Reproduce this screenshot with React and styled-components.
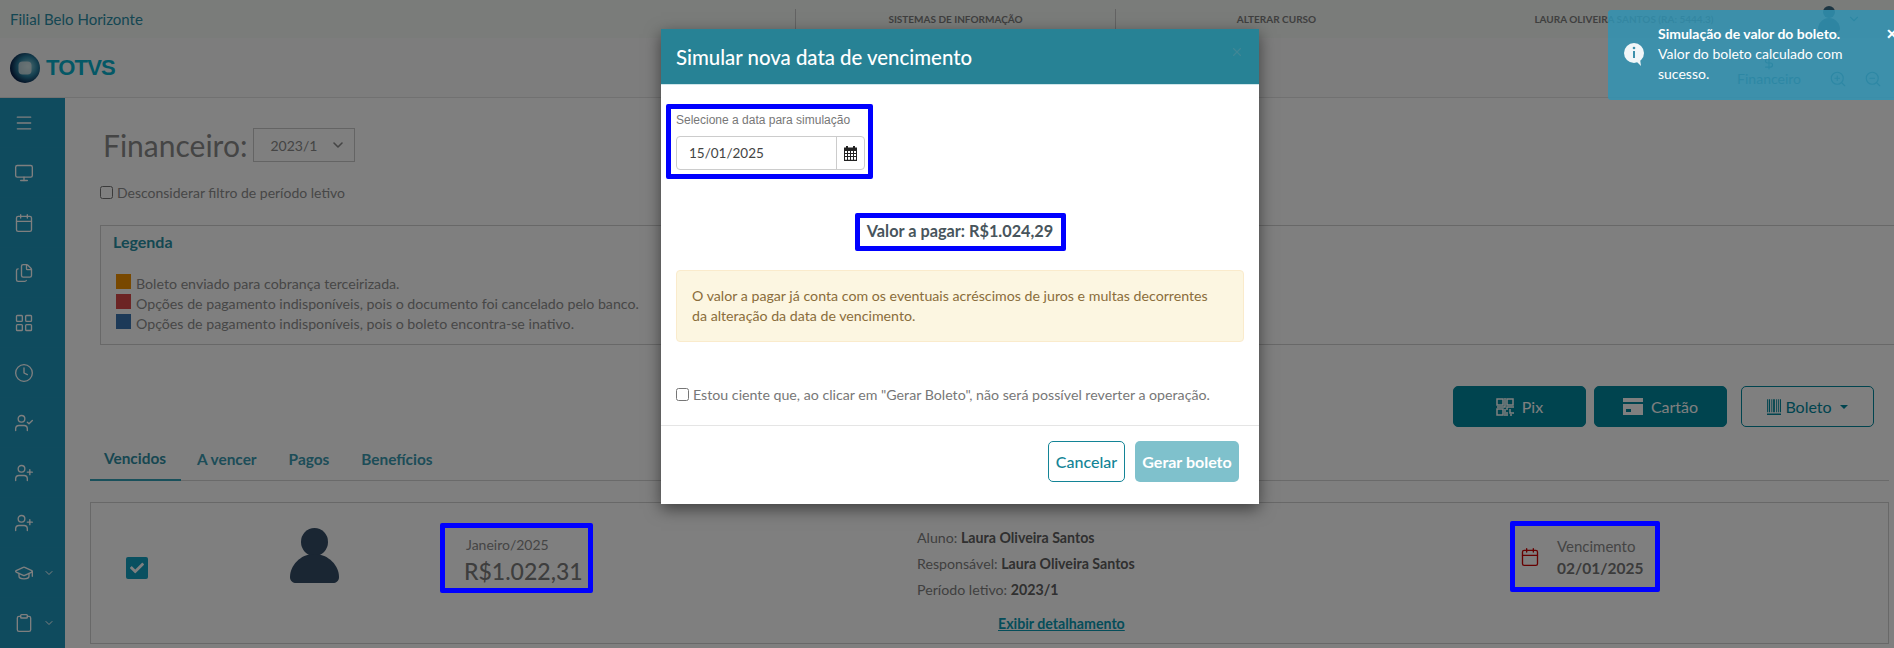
import React from "react";
import styled, { createGlobalStyle } from "styled-components";
import {
  Menu, Monitor, Calendar, Files, LayoutGrid, Clock, UserCheck, UserPlus,
  GraduationCap, Clipboard, ChevronDown, ZoomIn, ZoomOut, DollarSign, X,
} from "lucide-react";
import { FaCheck } from "react-icons/fa";

const Global = createGlobalStyle`
  html, body { margin: 0; padding: 0; width: 1894px; height: 648px; overflow: hidden; background: #fff; }
  * { box-sizing: border-box; }
  body { font-family: "Lato", "Noto Sans", sans-serif; font-size: 14px; color: #8a8a8a; }
`;

const Page = styled.div`
  width: 1894px; height: 648px; display: flex; flex-direction: column; overflow: hidden; position: relative;
`;
const TopBar = styled.div`
  height: 38px; display: flex; align-items: center; background: #f4f8f4; flex: none;
`;
const Branch = styled.div`
  width: 795px; padding-left: 10px; font-size: 15px; color: #2a8ea6;
`;
const TopCell = styled.div`
  width: ${(p) => p.$w}px; height: 20px; display: flex; align-items: center; justify-content: center;
  font-size: 10px; font-weight: 700; color: #7f7f7f;
  border-left: ${(p) => (p.$line ? "1px solid #c6c6c6" : "none")};
`;
const UserBlob = styled.div`
  margin-left: 6px; display: flex; align-items: center; gap: 6px; color: #3b6c86;
  svg:last-child { color: #2a8ea6; }
`;
const LogoBar = styled.div`
  height: 60px; flex: none; display: flex; align-items: center; justify-content: space-between;
  border-bottom: 1px solid #e2e2e2; padding: 0 12px 0 10px; background: #fbfbfb;
`;
const Logo = styled.div`
  display: flex; align-items: center; gap: 6px;
`;
const LogoWord = styled.span`
  font-family: "Liberation Sans", sans-serif; font-weight: 700; font-size: 22px; color: #08b0cc; letter-spacing: -0.8px;
`;
const ZoomTools = styled.div`
  display: flex; align-items: flex-end; gap: 17px; color: #2a8ea6; padding-top: 8px;
`;
const FinanceLink = styled.div`
  display: flex; flex-direction: column; align-items: center; font-size: 14px; margin-right: 11px; line-height: 18px;
`;
const Main = styled.div`
  flex: 1; display: flex; min-height: 0;
`;
const Sidebar = styled.nav`
  width: 65px; flex: none; background: #1f97bd; display: flex; flex-direction: column; overflow: hidden;
`;
const SideItem = styled.div`
  height: 50px; flex: none; display: flex; align-items: center; padding-left: 14px; gap: 9px; color: #fff;
  border-bottom: 1px solid #2196bd;
`;
const Content = styled.main`
  flex: 1; padding: 30px 5px 0 25px; min-width: 0;
`;
const TitleRow = styled.div`
  display: flex; align-items: center; gap: 6px; padding-left: 13px; height: 34px;
`;
const Title = styled.h1`
  margin: 0; font-size: 30px; font-weight: 400; color: #8a8a8a; line-height: 34px;
`;
const YearSelect = styled.div`
  width: 102px; height: 34px; border: 1px solid #c8c8c8; display: flex; align-items: center;
  justify-content: space-between; padding: 0 8px 0 16px; font-size: 14px; color: #8a8a8a; background: #fff;
`;
const FilterRow = styled.label`
  display: flex; align-items: center; gap: 4px; margin: 22px 0 0 10px; height: 17px; color: #8e8e8e; font-size: 14px;
`;
const Check = styled.input.attrs({ type: "checkbox" })`
  margin: 0; width: 13px; height: 13px; flex: none;
`;
const Legend = styled.section`
  margin: 24px -5px 0 10px; height: 120px; border: 1px solid #d0d0d0; border-right: 0; padding: 6px 15px 0 12px;
`;
const LegendTitle = styled.h3`
  margin: 0 0 21px; font-size: 16px; font-weight: 700; color: #2890a4; line-height: 20px;
`;
const LegendRow = styled.div`
  display: flex; align-items: center; gap: 5px; height: 20px; margin-left: 3px; color: #8e8e8e; font-size: 14.2px;
`;
const Swatch = styled.span`
  width: 15px; height: 15px; flex: none; background: ${(p) => p.$c}; margin-top: -3px;
`;
const Actions = styled.div`
  display: flex; justify-content: flex-end; gap: 8px; margin-top: 41px; padding-right: 15px;
`;
const PayButton = styled.button`
  width: 133px; height: 41px; border-radius: 5px; display: flex; align-items: center; justify-content: center;
  gap: ${(p) => (p.$outline ? "4px" : "8px")}; font-family: inherit; font-size: 16px;
  margin-left: ${(p) => (p.$outline ? "6px" : "0")};
  background: ${(p) => (p.$outline ? "#fff" : "#00889e")};
  border: 1px solid #00889e;
  color: ${(p) => (p.$outline ? "#00889e" : "#fff")};
`;
const Caret = styled.span`
  width: 0; height: 0; border-left: 4px solid transparent; border-right: 4px solid transparent;
  border-top: 4px solid currentColor; margin-left: 4px;
`;
const Tabs = styled.div`
  display: flex; margin-top: 10px; height: 44px; border-bottom: 1px solid #d4d4d4;
`;
const Tab = styled.div`
  height: 44px; display: flex; align-items: center; font-size: 15.4px; font-weight: 700;
  padding: ${(p) => (p.$active ? "0 15px 0 14px" : "0 16px")};
  color: ${(p) => (p.$active ? "#2f8ea3" : "#3a9ab0")};
  border-bottom: ${(p) => (p.$active ? "2px solid #32a0b6" : "none")};
`;
const Card = styled.section`
  margin-top: 21px; height: 142px; border: 1px solid #d0d0d0; display: grid;
  grid-template-columns: 199px 150px 477px 593px 1fr; padding-top: 20px; align-items: start;
`;
const CheckCell = styled.div`
  padding: 34px 0 0 35px;
`;
const CheckedBox = styled.span`
  width: 22px; height: 22px; border-radius: 2px; background: #12a0c0; color: #fff; display: flex;
  align-items: center; justify-content: center;
`;
const PersonCell = styled.div`
  padding-top: 5px;
`;
const MonthSlot = styled.div`
  width: 153px; height: 70px; padding: 10px 0 0 24px; display: flex; flex-direction: column;
`;
const MonthName = styled.span`
  font-size: 14px; color: #8a8a8a; line-height: 24px; padding-left: 2px;
`;
const MonthValue = styled.span`
  font-size: 23px; color: #7c7c7c; font-weight: 500; line-height: 28px;
`;
const InfoCell = styled.div`
  padding-top: 2px; font-size: 14.2px; color: #7e7e7e;
`;
const InfoLine = styled.div`
  line-height: 26px; b { color: #606060; }
`;
const DetailLink = styled.a`
  display: inline-block; margin: 8px 0 0 81px; line-height: 26px; font-weight: 700; color: #0a9ab4; text-decoration: underline;
`;
const DueSlot = styled.div`
  width: 150px; height: 71px; margin-top: -2px; display: flex; align-items: center; padding-left: 10px; gap: 17px; color: #cc0000;
`;
const DueText = styled.div`
  display: flex; flex-direction: column; color: #8a8a8a; font-size: 15px; line-height: 22px;
  b { font-size: 15.5px; color: #777; }
`;
const Overlay = styled.div`
  position: absolute; inset: 0; background: rgba(0, 0, 0, 0.5); padding: 29px 0 0 661px;
`;
const Frame = styled.div`
  position: absolute; left: ${(p) => p.$x}px; top: ${(p) => p.$y}px; width: ${(p) => p.$w}px; height: ${(p) => p.$h}px;
  border: 5px solid #0000ff; border-radius: 2px;
`;
const Highlight = styled.div`
  border: 5px solid #0000ff; border-radius: 2px; background: #fff;
`;
const Modal = styled.div`
  width: 598px; height: 475px; background: #fff; box-shadow: 0 5px 15px rgba(0, 0, 0, 0.5);
  display: flex; flex-direction: column;
`;
const ModalHeader = styled.header`
  height: 56px; flex: none; background: #278295; border-bottom: 1px solid #cfe6ea;
  display: flex; align-items: center; justify-content: space-between; padding: 0 15px;
  color: #fff; svg { color: #3f8795; margin-top: -10px; }
`;
const ModalTitle = styled.h4`
  margin: 0; font-size: 20.4px; font-weight: 500; line-height: 24px;
`;
const ModalBody = styled.div`
  padding: 19px 15px 21px; border-bottom: 1px solid #e5e5e5; flex: none; display: flex; flex-direction: column;
`;
const DateBox = styled(Highlight)`
  width: 207px; height: 75px; margin-left: -10px; padding: 3px 3px 0 5px;
`;
const DateLabel = styled.div`
  font-family: "Liberation Sans", sans-serif; font-size: 12px; color: #777; line-height: 16px;
`;
const DateField = styled.div`
  margin-top: 8px; width: 189px; height: 34px; border: 1px solid #ccc; border-radius: 4px; display: flex; font-size: 13.5px; color: #444;
`;
const DateValue = styled.div`
  flex: 1; padding-left: 12px; display: flex; align-items: center;
`;
const DateIcon = styled.div`
  width: 28px; border-left: 1px solid #ccc; display: flex; align-items: center; justify-content: center; color: #222;
`;
const ValueBox = styled(Highlight)`
  align-self: center; width: 211px; height: 38px; margin-top: 34px; padding-bottom: 3px; display: flex; align-items: center; justify-content: center;
  font-size: 16.3px; font-weight: 700; color: #48555c; white-space: nowrap;
`;
const Alert = styled.div`
  margin-top: 19px; height: 72px; padding: 15px 25px 15px 15px; border: 1px solid #faebcc; border-radius: 4px; background: #fcf6e1;
  color: #8a6d3b; line-height: 20px; font-size: 14.2px;
`;
const AgreeRow = styled.label`
  display: flex; align-items: center; gap: 4px; margin-top: 42px; height: 20px; color: #777; font-size: 14.2px; white-space: nowrap;
`;
const ModalFooter = styled.footer`
  display: flex; justify-content: flex-end; gap: 10px; padding: 15px 20px 0 0;
`;
const CancelButton = styled.button`
  width: 77px; height: 41px; border: 1px solid #138496; border-radius: 5px; background: #fff; color: #138496;
  font-family: inherit; font-size: 16px; font-weight: 500; padding: 0;
`;
const GenerateButton = styled.button`
  width: 104px; height: 41px; border: 0; border-radius: 5px; background: #7fc1cc; color: #fff;
  font-family: inherit; font-size: 16px; font-weight: 700; padding: 0;
`;
const Toast = styled.div`
  position: absolute; left: 1608px; top: 10px; width: 290px; height: 90px; border-radius: 3px;
  background: rgba(49, 147, 179, 0.85); color: #fff; padding: 14px 0 0 50px; font-size: 14px; line-height: 20px;
`;
const ToastIcon = styled.svg`
  position: absolute; left: 16px; top: 33px;
`;
const ToastClose = styled.span`
  position: absolute; left: 278px; top: 14px; color: #fff; font-weight: 700; font-size: 14px;
`;
const ToastText = styled.div`
  width: 190px; b { display: block; white-space: nowrap; }
`;

const stroke = { size: 20, strokeWidth: 1.6 };

function QrGlyph() {
  return (
    <svg width="18" height="18" viewBox="0 0 18 18" fill="none" stroke="currentColor" strokeWidth="1.5">
      <rect x="1" y="1" width="6" height="6" />
      <rect x="11" y="1" width="6" height="6" />
      <rect x="1" y="11" width="6" height="6" />
      <path d="M9 0v9H1M18 9h-7v3M11 14v4M14 11v4h4M9 11v7M14 17h2" />
    </svg>
  );
}
function CardGlyph() {
  return (
    <svg width="20" height="17" viewBox="0 0 20 17" fill="currentColor">
      <path d="M0 0h20v4H0z" />
      <path d="M0 6h20v11H0zM3 11v3h5v-3z" fillRule="evenodd" />
    </svg>
  );
}
function BarcodeGlyph() {
  return (
    <svg width="14" height="18" viewBox="0 0 16 18" fill="currentColor">
      <path d="M0 0h1v15H0zM2 0h1.5v15H2zM5 0h1v15H5zM7 0h2v15H7zM10.5 0h1v15h-1zM12.5 0h1v15h-1zM14.7 0h1.3v15h-1.3zM0 16.5h16V18H0z" />
    </svg>
  );
}
function GridCalendarGlyph() {
  return (
    <svg width="13" height="15" viewBox="0 0 13 15" fill="currentColor">
      <path
        fillRule="evenodd"
        d="M2 0h2v1.5h5V0h2v1.5h2V15H0V1.5h2zM1 5v2h2V5zM4 5v2h2V5zM7 5v2h2V5zM10 5v2h2V5zM1 8v2h2V8zM4 8v2h2V8zM7 8v2h2V8zM10 8v2h2V8zM1 11v2.8h2V11zM4 11v2.8h2V11zM7 11v2.8h2V11zM10 11v2.8h2V11z"
      />
    </svg>
  );
}
function PersonGlyph() {
  return (
    <svg width="49" height="55" viewBox="0 0 49 55" fill="#344c66">
      <ellipse cx="24.5" cy="14" rx="13.5" ry="14" />
      <path d="M24 26C10 26 0 38 0 49c0 4 3 6 6 6h37c3 0 6-2 6-6 0-11-10-23-25-23z" />
    </svg>
  );
}
function TotvsMark() {
  return (
    <svg width="30" height="30" viewBox="0 0 30 30">
      <defs>
        <radialGradient id="gl" cx="60%" cy="45%" r="60%">
          <stop offset="0" stopColor="#9ad8e0" />
          <stop offset="0.55" stopColor="#2a80a0" />
          <stop offset="1" stopColor="#061c44" />
        </radialGradient>
      </defs>
      <circle cx="15" cy="15" r="15" fill="url(#gl)" />
      <rect x="8.5" y="8.5" width="13" height="13" rx="4" fill="#e8eeee" opacity=".75" />
    </svg>
  );
}
function InfoBubble() {
  return (
    <ToastIcon width="20" height="24" viewBox="0 0 20 24">
      <circle cx="10" cy="10" r="10" fill="#f1f6f8" />
      <path d="M12 18l5 5-1-7z" fill="#f1f6f8" />
      <rect x="9" y="8" width="2" height="7" fill="#3d90ab" />
      <circle cx="10" cy="5" r="1.3" fill="#3d90ab" />
    </ToastIcon>
  );
}

const sideIcons = [Menu, Monitor, Calendar, Files, LayoutGrid, Clock, UserCheck, UserPlus, UserPlus];

export default function App() {
  return (
    <Page>
      <Global />
      <TopBar>
        <Branch>Filial Belo Horizonte</Branch>
        <TopCell $w={320} $line>SISTEMAS DE INFORMAÇÃO</TopCell>
        <TopCell $w={322} $line>ALTERAR CURSO</TopCell>
        <TopCell $w={374}>LAURA OLIVEIRA SANTOS (RA: 5444.3)</TopCell>
        <UserBlob>
          <svg width="24" height="28" viewBox="0 0 24 28" fill="currentColor">
            <circle cx="12" cy="7" r="6" />
            <path d="M12 13C5 13 1 19 1 24c0 2 2 3 3 3h16c1 0 3-1 3-3 0-5-4-11-11-11z" />
          </svg>
          <ChevronDown size={14} />
        </UserBlob>
      </TopBar>
      <LogoBar>
        <Logo>
          <TotvsMark />
          <LogoWord>TOTVS</LogoWord>
        </Logo>
        <ZoomTools>
          <FinanceLink>
            <DollarSign size={14} />
            Financeiro
          </FinanceLink>
          <ZoomIn size={18} strokeWidth={1.5} />
          <ZoomOut size={18} strokeWidth={1.5} />
        </ZoomTools>
      </LogoBar>
      <Main>
        <Sidebar>
          {sideIcons.map((Icon, i) => (
            <SideItem key={i}>
              <Icon {...stroke} />
            </SideItem>
          ))}
          <SideItem>
            <GraduationCap {...stroke} />
            <ChevronDown size={12} />
          </SideItem>
          <SideItem>
            <Clipboard {...stroke} />
            <ChevronDown size={12} />
          </SideItem>
        </Sidebar>
        <Content>
          <TitleRow>
            <Title>Financeiro:</Title>
            <YearSelect>
              2023/1
              <ChevronDown size={16} strokeWidth={2.4} />
            </YearSelect>
          </TitleRow>
          <FilterRow>
            <Check />
            Desconsiderar filtro de período letivo
          </FilterRow>
          <Legend>
            <LegendTitle>Legenda</LegendTitle>
            <LegendRow>
              <Swatch $c="#f09000" />
              Boleto enviado para cobrança terceirizada.
            </LegendRow>
            <LegendRow>
              <Swatch $c="#d84848" />
              Opções de pagamento indisponíveis, pois o documento foi cancelado pelo banco.
            </LegendRow>
            <LegendRow>
              <Swatch $c="#3a74b0" />
              Opções de pagamento indisponíveis, pois o boleto encontra-se inativo.
            </LegendRow>
          </Legend>
          <Actions>
            <PayButton>
              <QrGlyph />
              Pix
            </PayButton>
            <PayButton>
              <CardGlyph />
              Cartão
            </PayButton>
            <PayButton $outline>
              <BarcodeGlyph />
              Boleto
              <Caret />
            </PayButton>
          </Actions>
          <Tabs>
            <Tab $active>Vencidos</Tab>
            <Tab>A vencer</Tab>
            <Tab>Pagos</Tab>
            <Tab>Benefícios</Tab>
          </Tabs>
          <Card>
            <CheckCell>
              <CheckedBox>
                <FaCheck size={14} />
              </CheckedBox>
            </CheckCell>
            <PersonCell>
              <PersonGlyph />
            </PersonCell>
            <MonthSlot>
              <MonthName>Janeiro/2025</MonthName>
              <MonthValue>R$1.022,31</MonthValue>
            </MonthSlot>
            <InfoCell>
              <InfoLine>Aluno: <b>Laura Oliveira Santos</b></InfoLine>
              <InfoLine>Responsável: <b>Laura Oliveira Santos</b></InfoLine>
              <InfoLine>Período letivo: <b>2023/1</b></InfoLine>
              <DetailLink>Exibir detalhamento</DetailLink>
            </InfoCell>
            <DueSlot>
              <Calendar size={20} strokeWidth={1.6} />
              <DueText>
                Vencimento
                <b>02/01/2025</b>
              </DueText>
            </DueSlot>
          </Card>
        </Content>
      </Main>
      <Overlay>
        <Modal>
          <ModalHeader>
            <ModalTitle>Simular nova data de vencimento</ModalTitle>
            <X size={14} strokeWidth={2} />
          </ModalHeader>
          <ModalBody>
            <DateBox>
              <DateLabel>Selecione a data para simulação</DateLabel>
              <DateField>
                <DateValue>15/01/2025</DateValue>
                <DateIcon>
                  <GridCalendarGlyph />
                </DateIcon>
              </DateField>
            </DateBox>
            <ValueBox>Valor a pagar: R$1.024,29</ValueBox>
            <Alert>
              O valor a pagar já conta com os eventuais acréscimos de juros e multas decorrentes da alteração da data de vencimento.
            </Alert>
            <AgreeRow>
              <Check />
              Estou ciente que, ao clicar em "Gerar Boleto", não será possível reverter a operação.
            </AgreeRow>
          </ModalBody>
          <ModalFooter>
            <CancelButton>Cancelar</CancelButton>
            <GenerateButton>Gerar boleto</GenerateButton>
          </ModalFooter>
        </Modal>
      </Overlay>
      <Frame $x={440} $y={523} $w={153} $h={70} />
      <Frame $x={1510} $y={521} $w={150} $h={71} />
      <Toast>
        <InfoBubble />
        <ToastText>
          <b>Simulação de valor do boleto.</b>
          Valor do boleto calculado com sucesso.
        </ToastText>
        <ToastClose>✕</ToastClose>
      </Toast>
    </Page>
  );
}
